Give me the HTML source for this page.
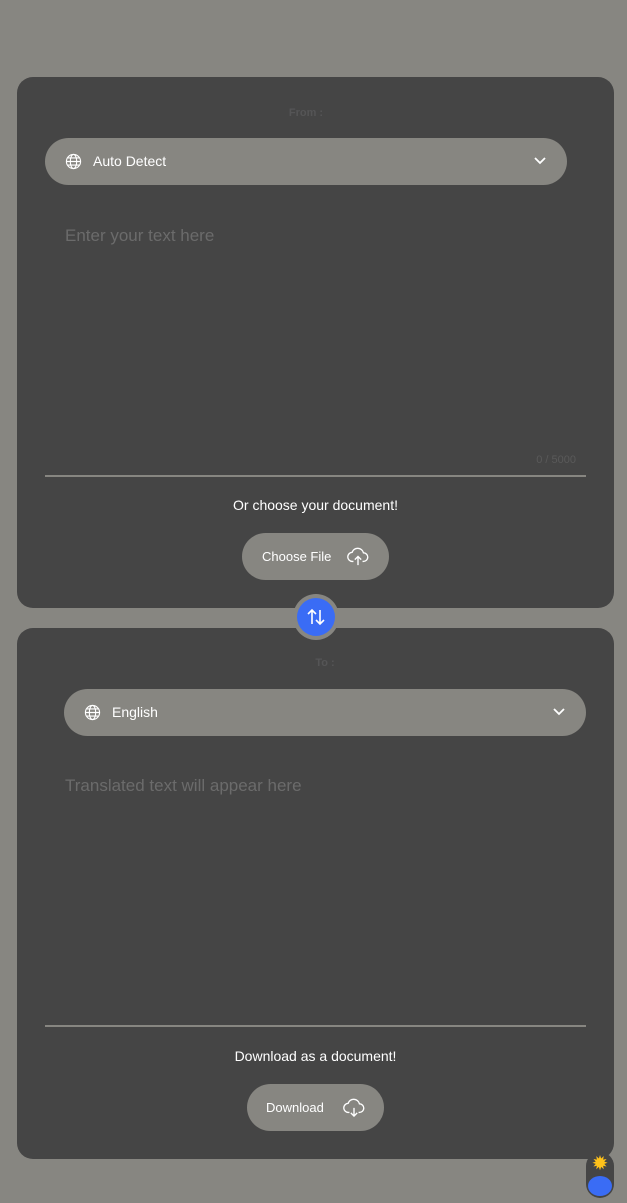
<!DOCTYPE html>
<html><head><style>
*{margin:0;padding:0;box-sizing:border-box}
body{width:627px;height:1203px;background:#878681;font-family:"Liberation Sans",sans-serif;position:relative;overflow:hidden}
.card{position:absolute;left:17px;width:597px;height:531px;background:#454545;border-radius:16px}
.lbl{position:absolute;text-align:center;font-size:11px;font-weight:bold;color:#555556}
.sel{position:absolute;height:47px;background:#878681;border-radius:24px;color:#fff;font-size:14px}
.sel span{position:absolute;left:48px;top:15px}
.sel svg.g{position:absolute;left:20px;top:15px}
.sel svg.c{position:absolute;right:20px;top:18px}
.ph{position:absolute;left:48px;font-size:17px;color:#6b6b6b}
.line{position:absolute;left:28px;width:541px;height:2px;background:#878681}
.t{position:absolute;width:100%;text-align:center;color:#fff;font-size:14px}
.btn{position:absolute;height:47px;background:#878681;border-radius:24px;color:#fff;font-size:13px}
</style></head><body>
<div class="card" style="top:77px">
  <div class="lbl" style="top:30px;left:28px;width:522px">From :</div>
  <div class="sel" style="left:28px;top:61px;width:522px">
    <svg class="g" width="17" height="17" viewBox="0 0 24 24" fill="none" stroke="#fff" stroke-width="1.6"><circle cx="12" cy="12" r="10"/><ellipse cx="12" cy="12" rx="4.5" ry="10"/><path d="M2 12h20M4 7h16M4 17h16"/></svg>
    <span>Auto Detect</span>
    <svg class="c" width="14" height="10" viewBox="0 0 14 10" fill="none" stroke="#fff" stroke-width="1.8"><path d="M2 2l5 5 5-5"/></svg>
  </div>
  <div class="ph" style="top:149px">Enter your text here</div>
  <div style="position:absolute;right:38px;top:377px;font-size:11px;color:#5a5a5a">0 / 5000</div>
  <div class="line" style="top:398px"></div>
  <div class="t" style="top:420px">Or choose your document!</div>
  <div class="btn" style="left:225px;top:456px;width:147px"><span style="position:absolute;left:20px;top:16px">Choose File</span>
  <svg style="position:absolute;left:105px;top:13px" width="22" height="20" viewBox="0 0 24 22" fill="none" stroke="#fff" stroke-width="1.5"><path d="M7 17H6a5 5 0 0 1-.5-10A6.5 6.5 0 0 1 18 7.5a4.5 4.5 0 0 1 0 9.5h-1"/><path d="M12 21v-9M8.5 15l3.5-3.5 3.5 3.5"/></svg></div>
</div>
<div class="card" style="top:628px">
  <div class="lbl" style="top:29px;left:47px;width:522px">To :</div>
  <div class="sel" style="left:47px;top:61px;width:522px">
    <svg class="g" width="17" height="17" viewBox="0 0 24 24" fill="none" stroke="#fff" stroke-width="1.6"><circle cx="12" cy="12" r="10"/><ellipse cx="12" cy="12" rx="4.5" ry="10"/><path d="M2 12h20M4 7h16M4 17h16"/></svg>
    <span>English</span>
    <svg class="c" width="14" height="10" viewBox="0 0 14 10" fill="none" stroke="#fff" stroke-width="1.8"><path d="M2 2l5 5 5-5"/></svg>
  </div>
  <div class="ph" style="top:148px">Translated text will appear here</div>
  <div class="line" style="top:397px"></div>
  <div class="t" style="top:420px">Download as a document!</div>
  <div class="btn" style="left:230px;top:456px;width:137px"><span style="position:absolute;left:19px;top:16px">Download</span>
  <svg style="position:absolute;left:96px;top:13px" width="22" height="20" viewBox="0 0 24 22" fill="none" stroke="#fff" stroke-width="1.5"><path d="M7 17H6a5 5 0 0 1-.5-10A6.5 6.5 0 0 1 18 7.5a4.5 4.5 0 0 1 0 9.5h-1"/><path d="M12 12v9M8.5 17.5l3.5 3.5 3.5-3.5"/></svg></div>
</div>
<div style="position:absolute;left:293px;top:594px;width:46px;height:46px;border-radius:50%;background:#878681"></div>
<div style="position:absolute;left:297px;top:598px;width:38px;height:38px;border-radius:50%;background:#3a6cf5">
<svg style="position:absolute;left:9px;top:9px" width="20" height="20" viewBox="0 0 20 20" fill="none" stroke="#fff" stroke-width="1.6"><path d="M6 17V3M2 7l4-4 4 4M14 3v14M10 13l4 4 4-4"/></svg></div>
<div style="position:absolute;left:586px;top:1152px;width:28px;height:46px;border-radius:14px;background:#454545">
<div style="position:absolute;left:4px;top:2px;width:20px;text-align:center;color:#ffc21a;font-size:20px;line-height:20px">✹</div>
<div style="position:absolute;left:2px;top:24px;width:24px;height:20px;border-radius:50%;background:#3a6cf5"></div></div>
</body></html>
